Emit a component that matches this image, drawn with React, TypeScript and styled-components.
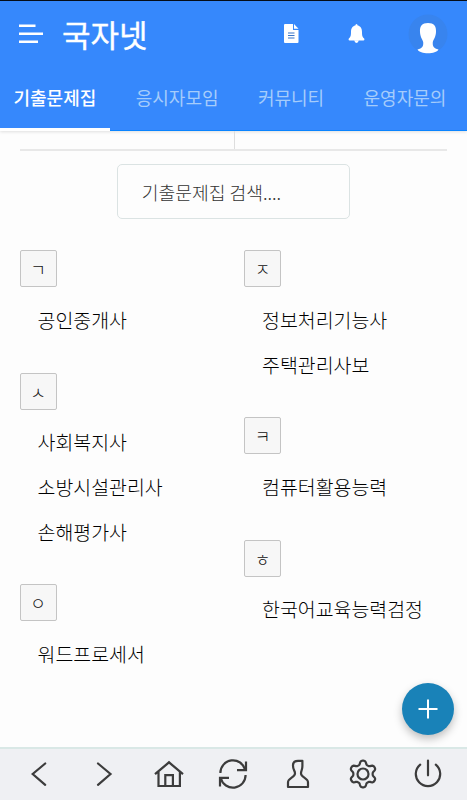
import React from "react";
import styled, { createGlobalStyle } from "styled-components";

const GlobalStyle = createGlobalStyle`
  *, *::before, *::after { box-sizing: border-box; }
  body {
    margin: 0;
    background: #fdfdfd;
    font-family: "Noto Sans CJK KR", "Noto Sans", sans-serif;
  }
`;

const Screen = styled.div`
  position: relative;
  display: flex;
  flex-direction: column;
  width: 467px;
  height: 800px;
  overflow: hidden;
  background: #fdfdfd;
`;

const Header = styled.header`
  flex: none;
  height: 131px;
  display: flex;
  flex-direction: column;
  background: #3688fc;
  border-top: 1px solid #050d18;
  box-shadow: inset 0 -1px 0 #0a84ff, 0 1px 3px rgba(0, 0, 0, 0.12);
`;

const TopBar = styled.div`
  display: flex;
  align-items: center;
  height: 65px;
  padding: 0 19px;
  color: #fff;
`;

const Title = styled.h1`
  flex: 1;
  margin: 0 0 0 18px;
  font-size: 31px;
  line-height: 64px;
  font-weight: 400;
  -webkit-text-stroke: 0.35px #fff;
`;

const Actions = styled.div`
  display: flex;
  align-items: center;
`;

const DocIcon = styled.svg`
  display: block;
  margin-right: 49px;
`;

const BellIcon = styled.svg`
  display: block;
  margin-right: 43px;
`;

const Tabs = styled.nav`
  display: flex;
  flex: 1;
  gap: 12.4px;
`;

const Tab = styled.a<{ $active?: boolean }>`
  flex: none;
  height: 65px;
  padding: 1px 13.5px 0;
  font-size: 18px;
  line-height: 61px;
  font-weight: ${(p) => (p.$active ? 500 : 400)};
  color: ${(p) => (p.$active ? "#fff" : "#a5ccfb")};
  border-bottom: 3px solid ${(p) => (p.$active ? "#fff" : "transparent")};
`;

const Main = styled.main`
  flex: 1;
  min-height: 0;
  padding: 0 20px 0 19.5px;
`;

const TableEdge = styled.div`
  display: grid;
  grid-template-columns: 215.5px 1fr;
  height: 20px;
  border-bottom: 2px solid #e8e8e8;
`;

const EdgeCell = styled.div`
  &:first-child { border-right: 1px solid #dedede; }
`;

const Search = styled.input`
  display: block;
  width: 233px;
  height: 55px;
  margin: 13px auto 0;
  padding: 0 24px 0 24px;
  font: 300 18.2px "Noto Sans CJK KR", sans-serif;
  background: #fdfdfd;
  border: 1px solid #dbe3e3;
  border-radius: 5px;
  &::placeholder { color: #333; opacity: 1; }
`;

const Columns = styled.div`
  display: grid;
  grid-template-columns: 224.5px 1fr;
  margin-top: 31.2px;
`;

const Group = styled.section`
  padding-bottom: 30px;
`;

const Initial = styled.h2`
  display: flex;
  align-items: center;
  justify-content: center;
  width: 37px;
  height: 37px;
  margin: 0 0 10.8px;
  font-size: 17px;
  line-height: 35px;
  font-weight: 300;
  color: #111;
  background: #f7f7f7;
  border: 1px solid #c4c4c4;
  border-radius: 2px;
`;

const Item = styled.a`
  display: block;
  height: 44.6px;
  padding-left: 18px;
  font-size: 19.45px;
  line-height: 44.6px;
  font-weight: 300;
  color: #000;
  white-space: nowrap;
`;

const AddButton = styled.button`
  position: absolute;
  right: 13px;
  bottom: 65px;
  display: grid;
  place-items: center;
  width: 52px;
  height: 52px;
  padding: 0;
  border: 0;
  border-radius: 50%;
  background: #1982b8;
  box-shadow: 0 4px 8px rgba(0, 0, 0, 0.25);
`;

const BottomBar = styled.nav`
  flex: none;
  display: flex;
  align-items: center;
  justify-content: space-between;
  height: 53px;
  padding: 0 23px 2px;
  background: #eff0f3;
  border-top: 2px solid #d9e8e6;
`;

const NavIcon = styled.svg`
  display: block;
  width: 32px;
  height: 32px;
  fill: none;
  stroke: #3c3c3c;
  stroke-width: 2.2;
`;

const tabs = ["기출문제집", "응시자모임", "커뮤니티", "운영자문의"];

const columns = [
  [
    { initial: "ㄱ", items: ["공인중개사"] },
    { initial: "ㅅ", items: ["사회복지사", "소방시설관리사", "손해평가사"] },
    { initial: "ㅇ", items: ["워드프로세서"] },
  ],
  [
    { initial: "ㅈ", items: ["정보처리기능사", "주택관리사보"] },
    { initial: "ㅋ", items: ["컴퓨터활용능력"] },
    { initial: "ㅎ", items: ["한국어교육능력검정"] },
  ],
];

/* Six rounded teeth, the first one pointing straight up. */
const gearPoints = Array.from({ length: 120 }, (_, i) => {
  const angle = (i / 120) * Math.PI * 2;
  const r = 11.5 + 2 * Math.tanh(1.6 * Math.cos(6 * angle));
  return `${(r * Math.sin(angle)).toFixed(2)},${(-r * Math.cos(angle)).toFixed(2)}`;
}).join(" ");

/* Each bottom bar drawing lives in a 32x32 box centred on the origin. */
const navIcons = [
  { name: "back", art: <path d="M6.2-10.5-6.3 0 6.2 10.8" strokeLinecap="round" /> },
  { name: "forward", art: <path d="M-6-10.5 6.5 0-6 10.8" strokeLinecap="round" /> },
  {
    name: "home",
    art: (
      <>
        <path d="M-14 .2 0-11.7 14 .2M-10.5-2V12H10.9V-2" />
        <path d="M-3.7 12V1.2H3.9V12" />
      </>
    ),
  },
  {
    name: "refresh",
    art: (
      <>
        <path d="M-12.6-1A12.6 12.6 0 0 1 12.2-4.2M12.6 1A12.6 12.6 0 0 1-12.2 4.2" />
        <path d="M13-12.5V-3.8H4M-13 12.5V3.8H-4" />
      </>
    ),
  },
  {
    name: "profile",
    art: (
      <path
        d="M4.4-13.2H0C-3.4-13.2-4.9-12-5-9C-5.2-3.5-3-4-3-.5C-3 3.5-10 4-10 8.5V13H10V8.5C10 4 3 3.5 3-.5C3-4 4.6-3.5 4.4-9Z"
        strokeLinejoin="round"
      />
    ),
  },
  {
    name: "settings",
    art: (
      <>
        <polygon points={gearPoints} strokeLinejoin="round" />
        <circle r="5.5" />
      </>
    ),
  },
  {
    name: "power",
    art: <path d="M0-13.5V1.3M-7.8-9.4A12.2 12.2 0 1 0 7.8-9.4" strokeLinecap="round" />,
  },
];

export default function App() {
  return (
    <Screen>
      <GlobalStyle />
      <Header>
        <TopBar>
          <svg width="25" height="20" viewBox="0 0 25 20" fill="none" stroke="#fff" strokeWidth="2.6">
            <path d="M0 1.8H16.5M0 9.8H24M0 17.8H19" />
          </svg>
          <Title>국자넷</Title>
          <Actions>
            <DocIcon width="15" height="20" viewBox="0 0 15 20">
              <path d="M1 0H9V6H14.5V18Q14.5 19 13.5 19H1Q0 19 0 18V1Q0 0 1 0Z" fill="#fff" />
              <path d="M10 0 14.5 4.8H10Z" fill="#fff" />
              <path d="M4 9H10.5M4 11.5H10.5M4 14H10.5" stroke="#3975c8" strokeWidth="1.1" />
            </DocIcon>
            <BellIcon width="17" height="20" viewBox="0 0 17 20" fill="#fff">
              <path d="M8.5 0Q9.5 0 9.7 1.5C13 2.2 14 5 14 8C14 12 14.5 13 16.2 14.5Q17 16.5 15.5 16.5H1.5Q0 16.5.8 14.5C2.5 13 3 12 3 8C3 5 4 2.2 7.3 1.5Q7.5 0 8.5 0Z" />
              <path d="M6.2 16.3H10.8Q10.3 18.9 8.5 18.9T6.2 16.3Z" />
            </BellIcon>
            <svg width="40" height="40" viewBox="0 0 40 40">
              <circle cx="20" cy="20" r="19.5" fill="#3884ee" />
              <path
                d="M20 9C26 9 28.3 12 28 18C27.8 23 25.5 25.5 24.8 28C24.4 32.5 25.8 34.5 30.5 35.5C29 38 25 39.3 20 39.3S11 38 9.5 35.5C14.2 34.5 15.6 32.5 15.2 28C14.5 25.5 12.2 23 12 18C11.7 12 14 9 20 9Z"
                fill="#fff"
              />
            </svg>
          </Actions>
        </TopBar>
        <Tabs>
          {tabs.map((label, i) => (
            <Tab key={label} $active={i === 0}>{label}</Tab>
          ))}
        </Tabs>
      </Header>
      <Main>
        <TableEdge>
          <EdgeCell />
          <EdgeCell />
        </TableEdge>
        <Search placeholder="기출문제집 검색...." />
        <Columns>
          {columns.map((groups, i) => (
            <div key={i}>
              {groups.map((group) => (
                <Group key={group.initial}>
                  <Initial>{group.initial}</Initial>
                  {group.items.map((item) => (
                    <Item key={item}>{item}</Item>
                  ))}
                </Group>
              ))}
            </div>
          ))}
        </Columns>
      </Main>
      <AddButton aria-label="추가">
        <svg width="20" height="20" viewBox="0 0 20 20" stroke="#fff" strokeWidth="2">
          <path d="M10 .5V19.5M.5 10H19.5" />
        </svg>
      </AddButton>
      <BottomBar>
        {navIcons.map((icon) => (
          <NavIcon key={icon.name} viewBox="-16 -16 32 32">{icon.art}</NavIcon>
        ))}
      </BottomBar>
    </Screen>
  );
}
